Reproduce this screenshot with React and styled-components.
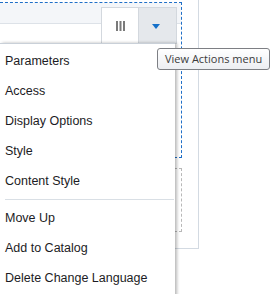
import React from 'react';
import styled, { createGlobalStyle } from 'styled-components';

const GlobalStyle = createGlobalStyle`
  html, body {
    margin: 0;
    padding: 0;
    background: #ffffff;
  }
  body {
    font-family: 'Liberation Sans', Arial, sans-serif;
  }
`;

const Page = styled.div`
  position: relative;
  width: 276px;
  height: 294px;
  overflow: hidden;
  background: #ffffff;
`;

const Panel = styled.div`
  width: 198px;
  border-right: 1px solid #d3dae2;
  border-bottom: 1px solid #d3dae2;
  padding: 2px 0 16px;
  display: flex;
  flex-direction: column;
  gap: 10px;
`;

const Section = styled.div`
  width: 181px;
  height: ${(p) => p.$h}px;
  border: 1px dashed ${(p) => p.$color};
  border-left: none;
`;

const Strip = styled.div`
  height: 20px;
  background: #f4f6f9;
  border-bottom: 1px solid #dde2e8;
  display: flex;
  justify-content: flex-end;
  align-items: flex-start;
  padding-right: 4px;
`;

const ButtonGroup = styled.div`
  margin-top: 4px;
  height: 35px;
  display: flex;
  border: 1px solid #d3d8de;
  background: #ffffff;
`;

const ToolButton = styled.div`
  width: ${(p) => p.$w}px;
  display: flex;
  align-items: center;
  justify-content: center;
  background: ${(p) => (p.$active ? '#e5e8ec' : '#ffffff')};
  border-left: ${(p) => (p.$active ? '1px solid #d3d8de' : 'none')};
`;

const Caret = styled.svg`
  margin: 2px 0 0 -3px;
`;

const Menu = styled.ul`
  position: absolute;
  left: 0;
  top: 43px;
  width: 175px;
  height: 260px;
  margin: 0;
  padding: 2px 0 0;
  list-style: none;
  background: #ffffff;
  border-top: 1px solid #c9d0d8;
  box-shadow: 2px 0 3px rgba(0, 0, 0, 0.28);
  box-sizing: border-box;
`;

const MenuItem = styled.li`
  height: 30px;
  line-height: 30px;
  padding-left: 5px;
  font-size: 12.5px;
  color: #1c1c24;
  white-space: nowrap;
`;

const Separator = styled.li`
  height: 1px;
  margin: 3px 1px 3px 5px;
  background: #d9dfe5;
`;

const Tooltip = styled.div`
  position: absolute;
  left: 157px;
  top: 48px;
  height: 20px;
  line-height: 20px;
  padding: 0 7px;
  border: 1px solid #7d7f84;
  border-radius: 3px;
  background: linear-gradient(#ffffff, #eceef2);
  font-family: 'Open Sans', 'Noto Sans', sans-serif;
  font-size: 11px;
  color: #3b3b3b;
  white-space: nowrap;
`;

const ColumnsIcon = () => (
  <svg width="9" height="10" viewBox="0 0 9 10">
    <rect x="0" y="0" width="2" height="10" fill="#7a7a7a" />
    <rect x="3.5" y="0" width="2" height="10" fill="#7a7a7a" />
    <rect x="7" y="0" width="2" height="10" fill="#7a7a7a" />
  </svg>
);

const CaretIcon = () => (
  <Caret width="8" height="5" viewBox="0 0 8 5">
    <path d="M0 0 H8 L4 5 Z" fill="#1470c9" />
  </Caret>
);

const topItems = ['Parameters', 'Access', 'Display Options', 'Style', 'Content Style'];
const bottomItems = ['Move Up', 'Add to Catalog', 'Delete Change Language'];

export default function App() {
  return (
    <Page>
      <GlobalStyle />
      <Panel>
        <Section $color="#1f6fc7" $h={154}>
          <Strip>
            <ButtonGroup>
              <ToolButton $w={36}>
                <ColumnsIcon />
              </ToolButton>
              <ToolButton $w={37} $active>
                <CaretIcon />
              </ToolButton>
            </ButtonGroup>
          </Strip>
        </Section>
        <Section $color="#b8b8b8" $h={62} />
      </Panel>
      <Menu>
        {topItems.map((t) => (
          <MenuItem key={t}>{t}</MenuItem>
        ))}
        <Separator />
        {bottomItems.map((t) => (
          <MenuItem key={t}>{t}</MenuItem>
        ))}
      </Menu>
      <Tooltip>View Actions menu</Tooltip>
    </Page>
  );
}
